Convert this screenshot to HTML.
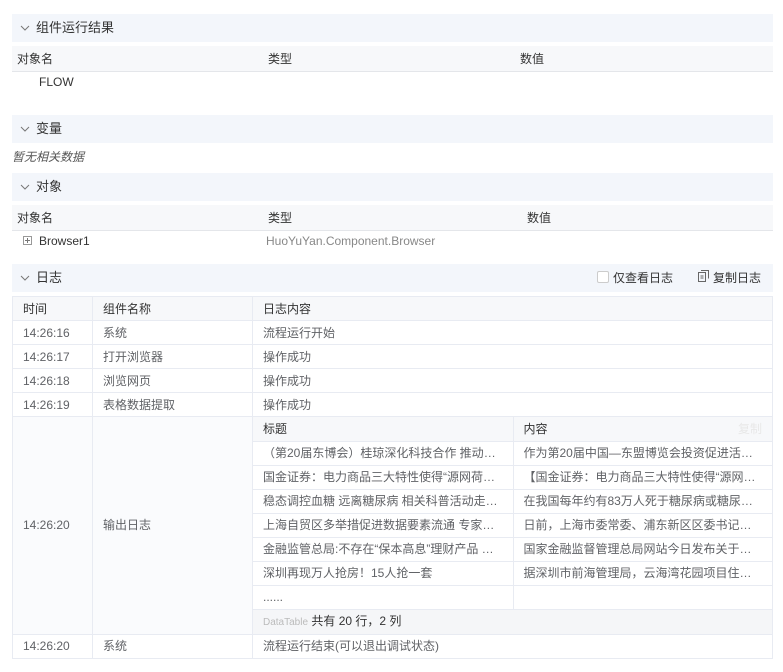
<!DOCTYPE html>
<html><head><meta charset="utf-8"><style>
*{box-sizing:border-box;margin:0;padding:0}
body{width:783px;height:672px;background:#fff;font-family:"Liberation Sans","Noto Sans CJK SC",sans-serif;font-size:12px;color:#606266;position:relative;overflow:hidden}
.a{position:absolute;white-space:nowrap}
.hd{position:absolute;left:12px;width:761px;height:28px;background:#f3f6fb;color:#333;font-size:13px;line-height:28px;padding-left:8px}
.hd svg{vertical-align:middle;margin-right:6px;margin-top:-2px}
.th{position:absolute;left:12px;width:761px;height:26px;background:#f7f8fa;border-bottom:1px solid #e4e6ea;color:#333;line-height:26px}
table{border-collapse:collapse;position:absolute;left:12px;top:296px;width:761px;table-layout:fixed}
td{border:1px solid #e8ebf2;height:24px;padding:0 10px;line-height:22px;white-space:nowrap;overflow:hidden;text-overflow:ellipsis;color:#606266}
tr.h td{background:#f7f8fa;color:#333}
td.big{background:#fafbfd;vertical-align:middle}
td.in{padding:0;vertical-align:top}
.it{position:static;width:100%;table-layout:fixed}
.it td{border-top:none;height:24px}
.it td:first-child{border-left:none}
.it td:last-child{border-right:none}
.it tr:last-child td{border-bottom:none}
</style></head><body>
<div class="hd" style="top:14px"><svg width="10" height="6"><path d="M1 1l4 4 4-4" stroke="#777" fill="none"/></svg>组件运行结果</div>
<div class="th" style="top:46px"><span class="a" style="left:5px">对象名</span><span class="a" style="left:256px">类型</span><span class="a" style="left:508px">数值</span></div>
<div class="a" style="left:39px;top:75px;color:#333">FLOW</div>
<div class="hd" style="top:115px"><svg width="10" height="6"><path d="M1 1l4 4 4-4" stroke="#777" fill="none"/></svg>变量</div>
<div class="a" style="left:12px;top:148px;font-style:italic;color:#555">暂无相关数据</div>
<div class="hd" style="top:173px"><svg width="10" height="6"><path d="M1 1l4 4 4-4" stroke="#777" fill="none"/></svg>对象</div>
<div class="th" style="top:205px"><span class="a" style="left:5px">对象名</span><span class="a" style="left:256px">类型</span><span class="a" style="left:515px">数值</span></div>
<div class="a" style="left:23px;top:236px;width:9px;height:9px;border:1px solid #999"></div>
<div class="a" style="left:25px;top:240px;width:5px;height:1px;background:#777"></div>
<div class="a" style="left:27px;top:238px;width:1px;height:5px;background:#777"></div>
<div class="a" style="left:39px;top:234px;color:#333">Browser1</div>
<div class="a" style="left:266px;top:234px;color:#888">HuoYuYan.Component.Browser</div>
<div class="hd" style="top:264px"><svg width="10" height="6"><path d="M1 1l4 4 4-4" stroke="#777" fill="none"/></svg>日志
<span class="a" style="left:585px;top:7px;width:12px;height:12px;border:1px solid #ccc;background:#fff;border-radius:2px"></span>
<span class="a" style="left:601px;top:0;font-size:12px">仅查看日志</span>
<svg class="a" style="left:686px;top:8px" width="11" height="12"><rect x="0.5" y="2.5" width="7" height="9" fill="none" stroke="#666"/><path d="M3 .5h7.5v8" fill="none" stroke="#666"/><path d="M2.5 6h3M2.5 8h3" stroke="#666"/></svg>
<span class="a" style="left:701px;top:0;font-size:12px">复制日志</span></div>
<table>
<colgroup><col style="width:80px"><col style="width:160px"><col></colgroup>
<tr class="h"><td>时间</td><td>组件名称</td><td>日志内容</td></tr>
<tr><td>14:26:16</td><td>系统</td><td>流程运行开始</td></tr>
<tr><td>14:26:17</td><td>打开浏览器</td><td>操作成功</td></tr>
<tr><td>14:26:18</td><td>浏览网页</td><td>操作成功</td></tr>
<tr><td>14:26:19</td><td>表格数据提取</td><td>操作成功</td></tr>
<tr><td class="big">14:26:20</td><td class="big">输出日志</td><td class="in">
<table class="it"><colgroup><col style="width:260px"><col></colgroup>
<tr class="h"><td>标题</td><td>内容<span style="float:right;color:#e8e8e8">复制</span></td></tr>
<tr><td>（第20届东博会）桂琼深化科技合作 推动两省区协同发展</td><td>作为第20届中国—东盟博览会投资促进活动之一</td></tr>
<tr><td>国金证券：电力商品三大特性使得“源网荷储”一体化</td><td>【国金证券：电力商品三大特性使得“源网荷储”</td></tr>
<tr><td>稳态调控血糖 远离糖尿病 相关科普活动走进社区</td><td>在我国每年约有83万人死于糖尿病或糖尿病并发症</td></tr>
<tr><td>上海自贸区多举措促进数据要素流通 专家建议</td><td>日前，上海市委常委、浦东新区区委书记朱芝松</td></tr>
<tr><td>金融监管总局:不存在“保本高息”理财产品 谨防受骗</td><td>国家金融监督管理总局网站今日发布关于防范风险</td></tr>
<tr><td>深圳再现万人抢房！15人抢一套</td><td>据深圳市前海管理局，云海湾花园项目住房销售</td></tr>
<tr><td>......</td><td></td></tr>
<tr><td colspan="2" style="background:#f5f6f8;color:#333"><span style="font-size:10px;color:#bbb">DataTable</span> 共有 20 行，2 列</td></tr>
</table></td></tr>
<tr><td>14:26:20</td><td>系统</td><td>流程运行结束(可以退出调试状态)</td></tr>
</table>
</body></html>
